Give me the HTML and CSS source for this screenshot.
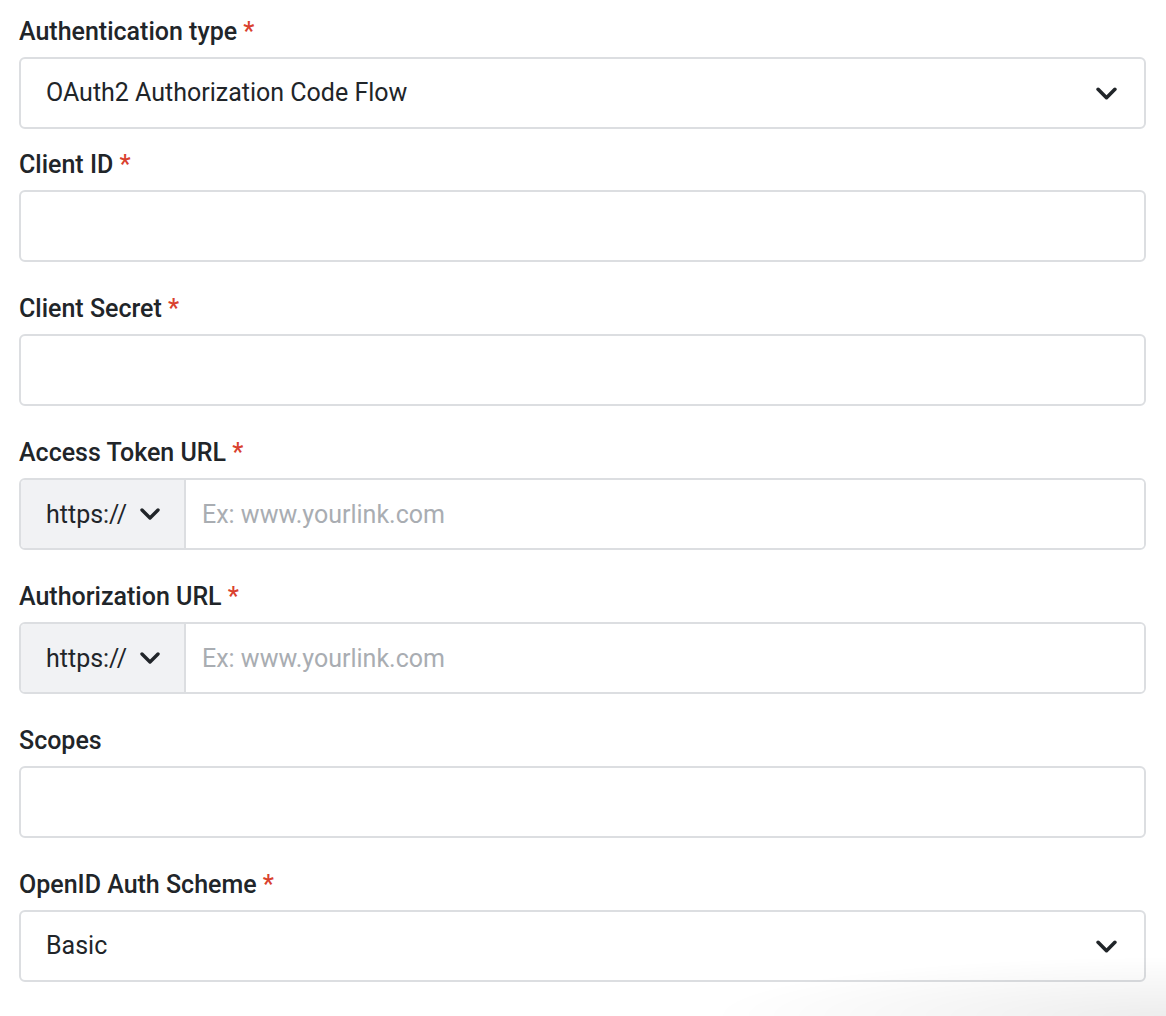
FILE: index.html
```html
<!DOCTYPE html>
<html lang="en">

<head>
  <meta charset="UTF-8" />
  <meta name="viewport" content="width=device-width, initial-scale=1.0" />
  <title>Authentication</title>
  <link rel="stylesheet" href="styles.css">
</head>

<body>
  <form class="auth-form">
    <div class="field first">
      <label class="field-label">Authentication type <span class="req">*</span></label>
      <div class="box select">
        <span class="value">OAuth2 Authorization Code Flow</span>
        <svg class="chevron" viewBox="0 0 20 12"><path d="M2 2l8 8 8-8" /></svg>
      </div>
    </div>

    <div class="field">
      <label class="field-label" for="clientId">Client ID <span class="req">*</span></label>
      <input class="box text" type="text" id="clientId" />
    </div>

    <div class="field">
      <label class="field-label" for="clientSecret">Client Secret <span class="req">*</span></label>
      <input class="box text" type="text" id="clientSecret" />
    </div>

    <div class="field">
      <label class="field-label" for="tokenUrl">Access Token URL <span class="req">*</span></label>
      <div class="box url">
        <div class="prefix">
          <span>https://</span>
          <svg class="chevron small" viewBox="0 0 20 12"><path d="M2 2l8 8 8-8" /></svg>
        </div>
        <input type="text" id="tokenUrl" placeholder="Ex: www.yourlink.com" />
      </div>
    </div>

    <div class="field">
      <label class="field-label" for="authUrl">Authorization URL <span class="req">*</span></label>
      <div class="box url">
        <div class="prefix">
          <span>https://</span>
          <svg class="chevron small" viewBox="0 0 20 12"><path d="M2 2l8 8 8-8" /></svg>
        </div>
        <input type="text" id="authUrl" placeholder="Ex: www.yourlink.com" />
      </div>
    </div>

    <div class="field">
      <label class="field-label" for="scopes">Scopes</label>
      <input class="box text" type="text" id="scopes" />
    </div>

    <div class="field">
      <label class="field-label">OpenID Auth Scheme <span class="req">*</span></label>
      <div class="box select">
        <span class="value">Basic</span>
        <svg class="chevron" viewBox="0 0 20 12"><path d="M2 2l8 8 8-8" /></svg>
      </div>
    </div>
  </form>
  <div class="corner-shade"></div>
</body>

</html>
```

FILE: styles.css
```css
* {
  box-sizing: border-box;
}

body {
  margin: 0;
  background: #ffffff;
  color: #212529;
  font-family: Roboto, "Noto Sans", Arial, sans-serif;
}

.auth-form {
  width: 1146px;
  padding: 18px 0 0 19px;
}

.field {
  margin-bottom: 33px;
}

.field.first {
  margin-bottom: 22px;
}

.field-label {
  display: block;
  font-size: 25px;
  line-height: 28px;
  font-weight: 500;
  margin-bottom: 11px;
  color: #212529;
}

.req {
  color: #d9412e;
}

.box {
  width: 100%;
  height: 72px;
  border: 2px solid #dcdee1;
  border-radius: 6px;
  background: #fff;
  font-family: inherit;
  font-size: 25px;
  color: #212529;
}

.text {
  display: block;
  padding: 0 25px;
  outline: none;
}

.select {
  display: flex;
  align-items: center;
  justify-content: space-between;
  padding: 0 27px 0 25px;
}

.value {
  margin-top: -2px;
}

.chevron {
  width: 21px;
  height: 13px;
  fill: none;
  stroke: #212529;
  stroke-width: 3.4;
  stroke-linecap: round;
  stroke-linejoin: round;
}

.chevron.small {
  width: 20px;
  height: 12px;
}

.url {
  display: flex;
  overflow: hidden;
}

.prefix {
  width: 165px;
  display: flex;
  align-items: center;
  gap: 13px;
  padding-left: 25px;
  background: #f1f2f4;
  border-right: 2px solid #dcdee1;
}

.url input {
  flex: 1;
  border: none;
  outline: none;
  padding: 0 16px;
  font-family: inherit;
  font-size: 25px;
  color: #212529;
}

.url input::placeholder {
  color: #a9adb2;
}

.corner-shade {
  position: fixed;
  right: 0;
  bottom: 0;
  width: 460px;
  height: 60px;
  pointer-events: none;
  background: radial-gradient(ellipse at 100% 100%, rgba(0, 0, 0, 0.07), rgba(0, 0, 0, 0) 70%);
}
```
